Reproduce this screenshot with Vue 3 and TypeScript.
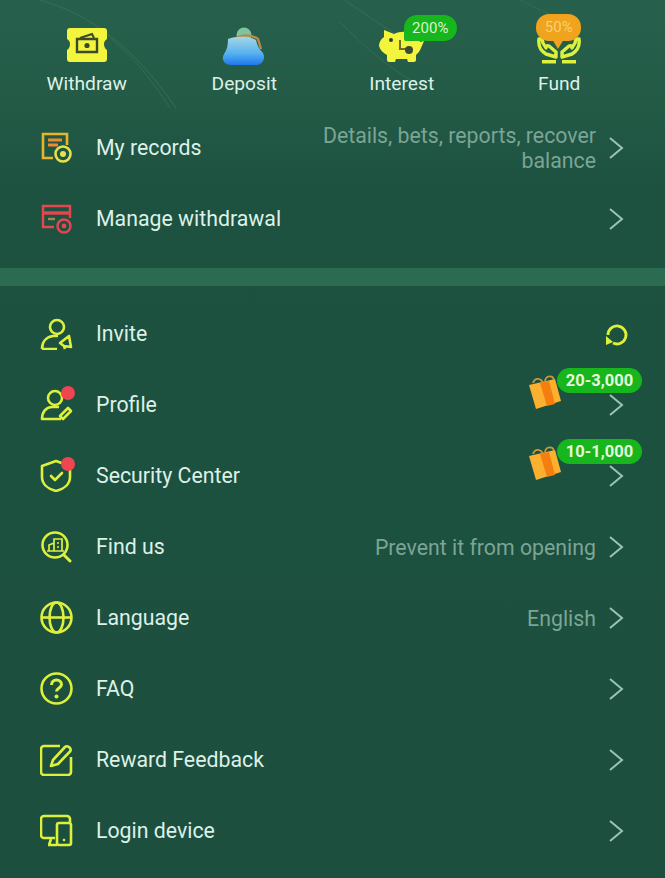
<script setup lang="ts">
interface Row {
  key: string
  label: string
  hint?: string
  dot?: boolean
  gift?: string
  refresh?: boolean
}

const tabs = [
  { key: 'withdraw', label: 'Withdraw' },
  { key: 'deposit', label: 'Deposit' },
  { key: 'interest', label: 'Interest' },
  { key: 'fund', label: 'Fund' },
]

const topRows: Row[] = [
  { key: 'records', label: 'My records', hint: 'Details, bets, reports, recover balance' },
  { key: 'manage', label: 'Manage withdrawal' },
]

const rows: Row[] = [
  { key: 'invite', label: 'Invite', refresh: true },
  { key: 'profile', label: 'Profile', dot: true, gift: '20-3,000' },
  { key: 'security', label: 'Security Center', dot: true, gift: '10-1,000' },
  { key: 'find', label: 'Find us', hint: 'Prevent it from opening' },
  { key: 'language', label: 'Language', hint: 'English' },
  { key: 'faq', label: 'FAQ' },
  { key: 'feedback', label: 'Reward Feedback' },
  { key: 'device', label: 'Login device' },
]

const sections = [topRows, rows]
</script>

<template>
  <div class="page">
    <svg class="decor" width="665" height="110" viewBox="0 0 665 110" fill="none">
      <path d="M40 0C90 14 135 48 176 108" stroke="#347059" stroke-width="1" />
      <path d="M100 30C130 52 152 80 170 108" stroke="#316c55" stroke-width="1" />
      <path d="M345 0C370 18 395 34 412 44" stroke="#347059" stroke-width="1" />
      <path d="M340 22C365 48 390 68 420 86" stroke="#316c55" stroke-width="1" />
      <path d="M520 0C535 8 550 14 560 18" stroke="#316c55" stroke-width="1" />
    </svg>

    <div class="tabs">
      <div v-for="tab in tabs" :key="tab.key" class="tab">
        <div class="tab-icon">
          <svg v-if="tab.key === 'withdraw'" class="ic-withdraw" width="42" height="34" viewBox="0 0 42 34">
            <path d="M4 0h34a3 3 0 0 1 3 3v8c-2 1-3 3-3 5s1 5 3 6v9a3 3 0 0 1-3 3H4a3 3 0 0 1-3-3v-9c2-1 3-4 3-6s-1-4-3-5V3a3 3 0 0 1 3-3z" fill="#f2f53c" />
            <path d="M11 11h20v13H11z" fill="none" stroke="#3c4a2a" stroke-width="2.4" />
            <path d="M14 10l12-4 2 4" fill="none" stroke="#3c4a2a" stroke-width="2" />
            <circle cx="21" cy="17.500" r="2.600" fill="#3c4a2a" />
          </svg>
          <svg v-else-if="tab.key === 'deposit'" width="44" height="42" viewBox="0 0 44 42">
            <defs>
              <linearGradient id="bag" x1="0" y1="0" x2="0" y2="1">
                <stop offset="0" stop-color="#a6d6e6" />
                <stop offset="0.6" stop-color="#55b0ef" />
                <stop offset="1" stop-color="#1d78ee" />
              </linearGradient>
            </defs>
            <circle cx="22" cy="9" r="7.500" fill="#7fc4a0" />
            <path d="M12 14c5-6 17-6 24-1l3 10" fill="none" stroke="#b78a4a" stroke-width="2.400" />
            <path d="M6 13c8-3 21-3 28 1 1 5 3 9 7 13 3 6-1 12-7 12H9C2 39-1 33 2 28c3-4 4-9 4-15z" fill="url(#bag)" />
          </svg>
          <svg v-else-if="tab.key === 'interest'" class="ic-pig" width="46" height="37" viewBox="0 0 46 37">
            <path d="M5 3l10 4c6-3 13-3 19 0 4 2 6 5 7 8l4-1-3 7c-1 3-3 5-5 7v5c0 1-1 2-2 2h-6l-1-3H17l-1 3h-6c-1 0-2-1-2-2v-5c-4-2-7-5-8-9 0-4 2-7 5-9z" fill="#f2f53c" />
            <circle cx="12" cy="13" r="2" fill="#2f3d28" />
            <path d="M21 13v9h7" fill="none" stroke="#6a6d30" stroke-width="2" />
            <circle cx="30" cy="23" r="4" fill="#3c4a38" />
          </svg>
          <svg v-else class="ic-fund" width="46" height="40" viewBox="0 0 46 40">
            <path d="M3 12c-1 7 2 12 7 15l10 3v-5l-7-6c-2-1-3 0-3 2l-3-5-1-4zM43 12c1 7-2 12-7 15l-10 3v-5l7-6c2-1 3 0 3 2l3-5 1-4z" fill="none" stroke="#dcf03c" stroke-width="3.400" stroke-linejoin="round" />
            <path d="M6 33h14v3.500H6zM26 33h14v3.500H26z" fill="#dcf03c" />
          </svg>
          <span v-if="tab.key === 'interest'" class="tag-green">200%</span>
          <span v-if="tab.key === 'fund'" class="tag-orange">50%</span>
        </div>
        <span class="tab-label">{{ tab.label }}</span>
      </div>
    </div>

    <template v-for="(section, i) in sections" :key="i">
      <div v-if="i === 1" class="divider"></div>
      <div class="section">
        <div v-for="row in section" :key="row.key" class="row">
          <div class="row-icon">
            <svg v-if="row.key === 'records'" width="33" height="33" viewBox="0 0 33 33" fill="none" stroke="#e6b52c" stroke-width="2.600">
              <path d="M13 27H3V3h24v11" />
              <path d="M8 9h14M8 14h10" stroke="#f08a2c" stroke-width="3" />
              <circle cx="23" cy="23" r="7.500" stroke="#e8e24a" />
              <circle cx="23" cy="23" r="3" fill="#e8e24a" stroke="none" />
            </svg>
            <svg v-else-if="row.key === 'manage'" width="33" height="33" viewBox="0 0 33 33" fill="none" stroke="#e8454f" stroke-width="2.400">
              <path d="M14 25H3V4h27v12" />
              <path d="M3 11h27" stroke-width="3.400" />
              <path d="M8 17h7" stroke="#9a8a5a" />
              <circle cx="24" cy="24" r="6.500" />
              <circle cx="24" cy="24" r="2.400" fill="#e8454f" stroke="none" />
            </svg>
            <svg v-else-if="row.key === 'invite'" width="33" height="33" viewBox="0 0 33 33" fill="none" stroke="#dcf03c" stroke-width="2.600">
              <circle cx="17" cy="10" r="7" />
              <path d="M2 32c0-7 4-12 11-13h5M2 32h15" stroke-linejoin="round" />
              <path d="M20 26l9-7 2 11-7-1zM24 29l1 3" stroke-linejoin="round" />
            </svg>
            <svg v-else-if="row.key === 'profile'" width="33" height="33" viewBox="0 0 33 33" fill="none" stroke="#dcf03c" stroke-width="2.600">
              <circle cx="15" cy="10" r="7" />
              <path d="M21 31H2c0-7 4-12 10-12h7" stroke-linejoin="round" />
              <path d="M23 31l-3-3 8-8 3 3-8 8z" stroke-linejoin="round" />
            </svg>
            <svg v-else-if="row.key === 'security'" width="33" height="33" viewBox="0 0 33 33" fill="none" stroke="#dcf03c" stroke-width="2.600">
              <path d="M16 2l14 5v11c0 7-6 12-14 14C8 30 2 25 2 18V7z" stroke-linejoin="round" />
              <path d="M11 17l4 4 7-7" stroke-linecap="round" stroke-linejoin="round" />
            </svg>
            <svg v-else-if="row.key === 'find'" width="33" height="33" viewBox="0 0 33 33" fill="none" stroke="#dcf03c" stroke-width="2.600">
              <circle cx="15" cy="15" r="12.500" />
              <path d="M24 25l6 6" stroke-width="3" stroke-linecap="round" />
              <path d="M9 21v-6l5-2v8M14 21V9h8v12M7 21h17M17 13h2M17 17h2" stroke-width="1.700" />
            </svg>
            <svg v-else-if="row.key === 'language'" width="33" height="33" viewBox="0 0 33 33" fill="none" stroke="#dcf03c" stroke-width="2.600">
              <circle cx="16.500" cy="16.500" r="15" />
              <ellipse cx="16.500" cy="16.500" rx="7" ry="15" />
              <path d="M2 16.500h29" />
            </svg>
            <svg v-else-if="row.key === 'faq'" width="33" height="33" viewBox="0 0 33 33" fill="none" stroke="#dcf03c" stroke-width="2.600">
              <circle cx="16.500" cy="16.500" r="15" />
              <path d="M11.500 13c0-3 2-5 5-5s5 2 5 4.500c0 3.500-5 3.500-5 7" stroke-width="3" />
              <circle cx="16.500" cy="24.500" r="2" fill="#dcf03c" stroke="none" />
            </svg>
            <svg v-else-if="row.key === 'feedback'" width="33" height="33" viewBox="0 0 33 33" fill="none" stroke="#dcf03c" stroke-width="2.600">
              <path d="M20 3H4a3 3 0 0 0-3 3v23a3 3 0 0 0 3 3h24a3 3 0 0 0 3-3V14" />
              <path d="M11 23l2-6L25 4c1-1 3-1 4.500.500s1.500 3 .500 4L18 21z" stroke-linejoin="round" />
            </svg>
            <svg v-else-if="row.key === 'device'" width="33" height="33" viewBox="0 0 33 33" fill="none" stroke="#dcf03c" stroke-width="2.600">
              <path d="M15 24H4a3 3 0 0 1-3-3V5a3 3 0 0 1 3-3h23a3 3 0 0 1 3 3v3" />
              <rect x="17" y="9" width="14" height="22" rx="2" />
              <path d="M8 31h9M11 25l-2 6" />
              <circle cx="24" cy="26" r="1.300" fill="#dcf03c" stroke="none" />
            </svg>
            <span v-if="row.dot" class="dot"></span>
          </div>
          <span class="row-label">{{ row.label }}</span>
          <span v-if="row.hint" class="row-hint">{{ row.hint }}</span>
          <svg v-if="row.refresh" class="refresh" width="24" height="24" viewBox="0 0 24 24" fill="none" stroke="#dcf03c" stroke-width="2.800">
            <path d="M3 12A9 9 0 1 1 8 20" />
            <path d="M1 13l7 6-7 3z" fill="#dcf03c" stroke="none" />
          </svg>
          <svg v-else class="chevron" width="16" height="24" viewBox="0 0 16 24" fill="none" stroke="#9cc4b4" stroke-width="2">
            <path d="M2 2l12 10L2 22" />
          </svg>
          <div v-if="row.gift" class="gift">
            <svg width="34" height="35" viewBox="0 0 34 35">
              <path d="M1 10l26-6 6 22-25 8z" fill="#fbb030" />
              <path d="M12 8l9-2 6 23-8 2z" fill="#f57e10" />
              <path d="M5 8c2-6 8-5 10 0M17 6c1-6 8-6 9-1" fill="none" stroke="#c99a3c" stroke-width="1.800" />
            </svg>
            <span class="gift-badge">{{ row.gift }}</span>
          </div>
        </div>
      </div>
    </template>
  </div>
</template>

<style>
html,
body {
  margin: 0;
  background: #1c4f3e;
}
</style>

<style scoped>
.page {
  position: relative;
  height: 878px;
  overflow: hidden;
  font-family: Roboto, "Noto Sans", sans-serif;
  background: linear-gradient(180deg, #27604c 0, #225a46 110px, #1d5140 190px, #1c4f3e 100%);
}

.decor {
  position: absolute;
  top: 0;
  left: 0;
}

.tabs {
  position: relative;
  display: grid;
  grid-template-columns: repeat(4, 157.5px);
  height: 112px;
  padding-left: 8px;
  box-sizing: border-box;
}

.tab {
  display: flex;
  flex-direction: column;
  align-items: center;
  padding-top: 26px;
}

.tab-icon {
  position: relative;
  display: flex;
  align-items: flex-end;
  justify-content: center;
  width: 60px;
  height: 42px;
}

.ic-withdraw {
  margin-bottom: 6px;
}

.ic-pig {
  margin-bottom: 4px;
}

.ic-fund {
  margin-bottom: 1px;
}

.tab-label {
  margin-top: 4px;
  font-size: 19.200px;
  line-height: 24px;
  color: #dcf1e8;
}

.tag-green {
  position: absolute;
  top: -11px;
  left: 32px;
  width: 53px;
  height: 26px;
  border-radius: 13px 13px 13px 2px;
  background: #16b61c;
  font-size: 15px;
  line-height: 26px;
  text-align: center;
  color: #d6f5cf;
}

.tag-orange {
  position: absolute;
  top: -12px;
  left: 7px;
  width: 45px;
  height: 27px;
  border-radius: 13px;
  background: #f0a31c;
  font-size: 15px;
  line-height: 27px;
  text-align: center;
  color: #f7d272;
}

.tag-orange::after {
  content: "";
  position: absolute;
  left: 16px;
  bottom: -8px;
  border-left: 6.500px solid transparent;
  border-right: 6.500px solid transparent;
  border-top: 10px solid #f0a31c;
}

.divider {
  height: 18px;
  margin: 14px 0 12px;
  background: #2b6b52;
}

.row {
  position: relative;
  display: flex;
  align-items: center;
  height: 71px;
  padding: 0 41px 0 40px;
}

.row-icon {
  position: relative;
  flex: none;
  display: flex;
  width: 33px;
  height: 33px;
  margin-right: 23px;
}

.row-label {
  flex: none;
  font-size: 21.300px;
  color: #dcf1e8;
}

.row-hint {
  max-width: 285px;
  margin-left: auto;
  padding-top: 1px;
  font-size: 21.300px;
  line-height: 25px;
  text-align: right;
  color: #7ba595;
}

.chevron {
  flex: none;
  margin-left: auto;
}

.row-hint + .chevron {
  margin-left: 12px;
}

.refresh {
  flex: none;
  margin-left: auto;
  margin-right: -5px;
  margin-top: 3px;
}

.dot {
  position: absolute;
  top: -2px;
  right: -2px;
  width: 14px;
  height: 14px;
  border-radius: 50%;
  background: #ee4550;
}

.gift {
  position: absolute;
  top: -1px;
  left: 528px;
  width: 114px;
  height: 42px;
}

.gift svg {
  position: absolute;
  top: 7px;
  left: 0;
}

.gift-badge {
  position: absolute;
  top: 0;
  right: 0;
  width: 85px;
  height: 25px;
  border-radius: 13px;
  background: #16b61c;
  font-size: 16.500px;
  font-weight: 700;
  line-height: 25px;
  text-align: center;
  color: #e6f7dc;
}
</style>
